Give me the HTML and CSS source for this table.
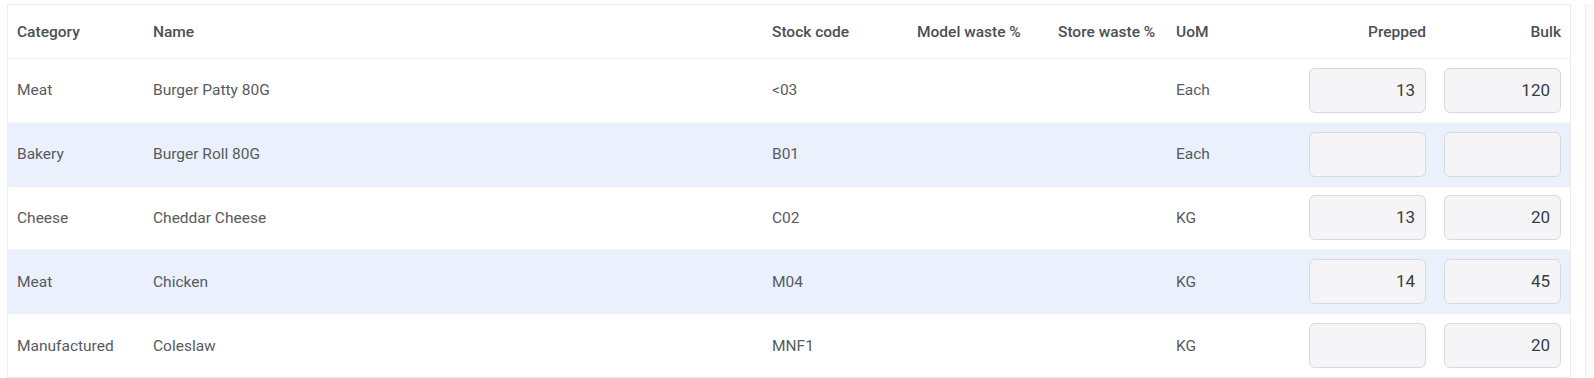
FILE: index.html
```html
<!DOCTYPE html>
<html>
<head>
<meta charset="utf-8">
<link rel="stylesheet" href="styles.css">
</head>
<body>
<div class="page">
  <div class="card">
    <div class="row head">
      <div class="cell">Category</div>
      <div class="cell">Name</div>
      <div class="cell">Stock code</div>
      <div class="cell">Model waste %</div>
      <div class="cell">Store waste %</div>
      <div class="cell">UoM</div>
      <div class="cell right">Prepped</div>
      <div class="cell right">Bulk</div>
    </div>
    <div class="row">
      <div class="cell">Meat</div>
      <div class="cell">Burger Patty 80G</div>
      <div class="cell">&lt;03</div>
      <div class="cell"></div>
      <div class="cell"></div>
      <div class="cell">Each</div>
      <div class="cell"><div class="inp">13</div></div>
      <div class="cell"><div class="inp">120</div></div>
    </div>
    <div class="row alt">
      <div class="cell">Bakery</div>
      <div class="cell">Burger Roll 80G</div>
      <div class="cell">B01</div>
      <div class="cell"></div>
      <div class="cell"></div>
      <div class="cell">Each</div>
      <div class="cell"><div class="inp"></div></div>
      <div class="cell"><div class="inp"></div></div>
    </div>
    <div class="row">
      <div class="cell">Cheese</div>
      <div class="cell">Cheddar Cheese</div>
      <div class="cell">C02</div>
      <div class="cell"></div>
      <div class="cell"></div>
      <div class="cell">KG</div>
      <div class="cell"><div class="inp">13</div></div>
      <div class="cell"><div class="inp">20</div></div>
    </div>
    <div class="row alt">
      <div class="cell">Meat</div>
      <div class="cell">Chicken</div>
      <div class="cell">M04</div>
      <div class="cell"></div>
      <div class="cell"></div>
      <div class="cell">KG</div>
      <div class="cell"><div class="inp">14</div></div>
      <div class="cell"><div class="inp">45</div></div>
    </div>
    <div class="row">
      <div class="cell">Manufactured</div>
      <div class="cell">Coleslaw</div>
      <div class="cell">MNF1</div>
      <div class="cell"></div>
      <div class="cell"></div>
      <div class="cell">KG</div>
      <div class="cell"><div class="inp"></div></div>
      <div class="cell"><div class="inp">20</div></div>
    </div>
  </div>
  <div class="side"></div>
</div>
</body>
</html>
```

FILE: styles.css
```css
* { box-sizing: border-box; }
html, body { margin: 0; padding: 0; background: #ffffff; }
body {
  font-family: Roboto, "Liberation Sans", Arial, sans-serif;
  font-size: 15.5px;
  color: #575b61;
  height: 378px;
  overflow: hidden;
}
.page {
  display: flex;
  padding: 4px 0 0 7px;
  height: 378px;
  gap: 14px;
}
.card {
  width: 1564px;
  flex: none;
  border: 1px solid #ededed;
  background: #fff;
  height: 374px;
  overflow: hidden;
}
.side {
  flex: 1;
  border-left: 1px solid #ededed;
  background: #fbfbfb;
}
.row {
  display: grid;
  grid-template-columns: 136px 619px 145px 141px 118px 133px 135px 135px;
  align-items: center;
  height: 63.8px;
  border-bottom: 1px solid #f6f6f6;
}
.row.head {
  height: 54px;
  font-weight: 500;
  color: #4c4f54;
  border-bottom: 1px solid #f1f1f1;
}
.row.alt { background: #ebf1fc; border-bottom-color: #ebf1fc; }
.cell {
  padding: 0 9px;
  white-space: nowrap;
}
.cell.right { text-align: right; }
.inp {
  height: 45px;
  border: 1px solid #d9d9dc;
  border-radius: 6px;
  background: #f5f5f7;
  text-align: right;
  padding-right: 10px;
  font-size: 17px;
  line-height: 43px;
  color: #3a3d42;
}
```
